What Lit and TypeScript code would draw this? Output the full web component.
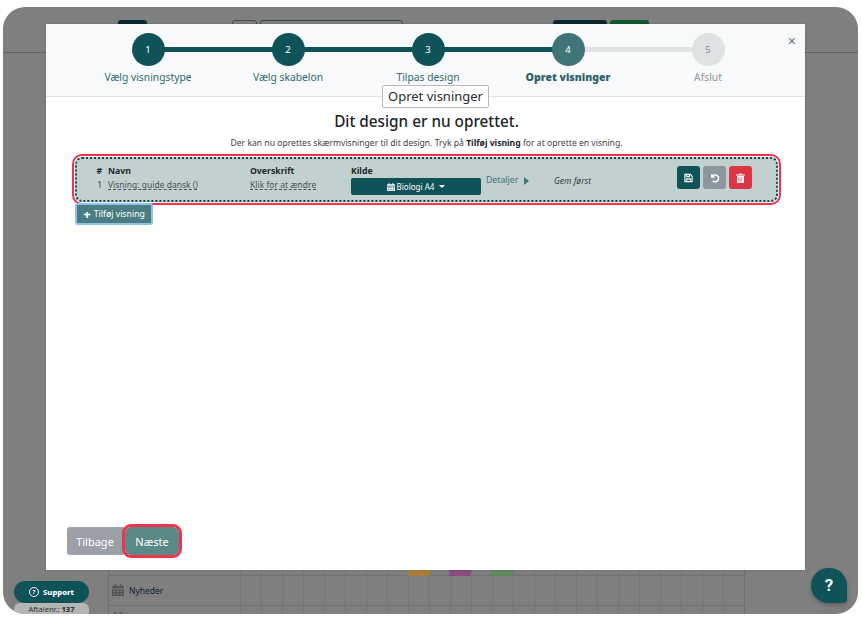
import { LitElement, html, css } from "lit";
import { customElement } from "lit/decorators.js";

const cal = (size: number) => html`<svg class="cal" width=${size} height=${size} viewBox="0 0 14 14"><path fill="currentColor" d="M3 0h1.6v2H9.4V0H11v2h2a1 1 0 0 1 1 1v2H0V3a1 1 0 0 1 1-1h2zM0 6h14v7a1 1 0 0 1-1 1H1a1 1 0 0 1-1-1zm2 1.5v1.6h2V7.500zm4 0v1.600h2V7.500zm4 0v1.600h2V7.500zM2 11v1.600h2V11zm4 0v1.600h2V11zm4 0v1.600h2V11z" fill-rule="evenodd"/></svg>`;

const steps = [
  { n: 1, label: "Vælg visningstype", state: "done" },
  { n: 2, label: "Vælg skabelon", state: "done" },
  { n: 3, label: "Tilpas design", state: "done" },
  { n: 4, label: "Opret visninger", state: "active" },
  { n: 5, label: "Afslut", state: "todo" },
];

@customElement("app-root")
export class AppRoot extends LitElement {
  static styles = css`
    :host { display: block; width: 862px; height: 618px; background: #fff; font-family: "Noto Sans", "Open Sans", sans-serif; overflow: hidden; }
    .frame { position: relative; margin: 7px 4px 4px 3px; height: 607px; border-radius: 22px; background: #7f7f7f; overflow: hidden; }
    .topline { position: absolute; left: 0; right: 0; top: 45px; height: 1px; background: #5f6364; }
    .ghost { position: absolute; top: 13px; height: 10px; border-radius: 3px 3px 0 0; }
    .g1 { left: 115px; width: 29px; background: #0b2a2d; }
    .g2 { left: 229px; width: 25px; border: 1px solid #3d4d4e; box-sizing: border-box; }
    .g3 { left: 257px; width: 143px; border: 1px solid #2d4a4c; box-sizing: border-box; }
    .g4 { left: 550px; width: 54px; background: #0b2a2d; }
    .g5 { left: 607px; width: 39px; background: #0f5a2c; }
    .grid { position: absolute; left: 105px; top: 563px; width: 635px; height: 44px; border-left: 1px solid #6f6f6f; border-right: 1px solid #6f6f6f;
      background-image: linear-gradient(180deg, transparent 5px, #707070 5px, #707070 6px, transparent 6px, transparent 35px, #707070 35px, #707070 36px, transparent 36px); }
    .cells { position: absolute; left: 131px; right: 0; top: 0; bottom: 0;
      background-image: linear-gradient(90deg, #747474 1px, transparent 1px); background-size: 21px 100%; }
    .chip { position: absolute; top: 0; width: 22px; height: 6px; border-radius: 0 0 2px 2px; }
    .c1 { left: 299px; background: #a67c3c; }
    .c2 { left: 340px; background: #8a4d7e; }
    .c3 { left: 382px; background: #5f8a5f; }
    .rowlabel { position: absolute; left: 3px; top: 14px; display: flex; align-items: center; gap: 5px; font-size: 8.500px; color: #101a3a; }
    .rowlabel .cal, .rowicon { color: #555; }
    .rowicon { position: absolute; left: 3px; top: 37px; }
    .support { position: absolute; left: 11px; top: 574px; width: 75px; height: 22px; border-radius: 11px; background: #0f5257; color: #fff; font-size: 7.700px; font-weight: 800; display: flex; align-items: center; justify-content: center; gap: 4px; }
    .qicon { width: 8px; height: 8px; border-radius: 50%; border: 1px solid #fff; font-size: 6px; line-height: 8px; text-align: center; font-weight: 700; }
    .deal { position: absolute; left: 11px; top: 596px; width: 75px; height: 11px; border-radius: 6px 6px 0 0; background: #b5b5b5; color: #333; font-size: 7.500px; line-height: 12px; text-align: center; }
    .deal b { font-weight: 800; }
    .help { position: absolute; left: 808px; top: 561px; width: 36px; height: 35px; border-radius: 18px 18px 4px 18px; background: #0f5257; color: #fff; font: 700 17px/35px Roboto, sans-serif; text-align: center; box-shadow: 0 2px 4px rgba(0,0,0,.25); }

    .modal { position: absolute; left: 43px; top: 17px; width: 759px; height: 546px; background: #fff; display: flex; flex-direction: column; box-shadow: 0 0 2px rgba(0,0,0,.2); }
    .head { height: 72px; background: #f8f9fa; border-bottom: 1px solid #dee2e6; box-sizing: content-box; display: flex; justify-content: flex-start; padding-left: 32px; position: relative; flex: none; }
    .step { width: 140px; flex: none; display: flex; flex-direction: column; align-items: center; position: relative; padding-top: 9px; }
    .circle { width: 33px; height: 33px; border-radius: 50%; background: #0f5257; color: #fff; font-size: 9.500px; display: flex; align-items: center; justify-content: center; position: relative; z-index: 1; }
    .step.active .circle { background: #407578; }
    .step.todo .circle { background: #dee2e3; color: #8a9094; }
    .step .bar { position: absolute; left: 70px; width: 140px; top: 23px; height: 5px; background: #0f5257; }
    .step.active .bar { background: #dfe3e4; }
    .lab { margin-top: 4px; font-size: 10.300px; line-height: 14px; color: #30696d; white-space: nowrap; }
    .step.active .lab { font-size: 10.500px; font-weight: 900; color: #2d6165; }
    .step.todo .lab { color: #8f9599; }
    .close { position: absolute; right: 9px; top: 9px; font-size: 14px; line-height: 16px; color: #6c7074; font-family: "Liberation Sans", sans-serif; }
    .tip { position: absolute; left: 336px; top: 61px; width: 107px; height: 23px; box-sizing: border-box; border: 1px solid #b9b9b9; border-radius: 2px; background: #fff; color: #2b2b2b; font-size: 13px; line-height: 21px; text-align: center; white-space: nowrap; z-index: 3; }

    .body { flex: 1; display: flex; flex-direction: column; align-items: stretch; padding: 0 24px 0 26px; min-height: 0; }
    h2 { margin: 13px 0 0; font-size: 15.300px; line-height: 22px; font-weight: 500; color: #212529; text-align: center; }
    .sub { margin: 4px 0 0; font-size: 8.600px; line-height: 14px; color: #3a3f44; text-align: center; }
    .sub b { font-weight: 700; color: #212529; }
    .hl { margin-top: 4px; height: 51px; box-sizing: border-box; border: 2.500px solid #f0324b; border-radius: 10px; padding: 1px; background: #fff; }
    .row { height: 100%; box-sizing: border-box; background: #c2d1d0; border: 2px dotted #0f4549; border-radius: 7px; display: grid; grid-template-columns: 31px 142px 101px 135px 68px 123px auto; align-items: start; font-size: 8.500px; color: #343a40; }
    .cell { padding-top: 6px; line-height: 13px; white-space: nowrap; }
    .num { text-align: right; padding-right: 6px; padding-left: 5px; }
    .cell b { display: block; font-weight: 700; color: #212529; font-size: 8.700px; }
    .ul { text-decoration: underline dashed; text-decoration-skip-ink: none; text-underline-offset: 1px; color: #4a5055; }
    .dd { width: 130px; height: 17px; background: #0f5257; color: #fff; border-radius: 2px; display: flex; align-items: center; justify-content: center; gap: 2px; font-size: 8px; }
    .caret { width: 0; height: 0; border: 3px solid transparent; border-top-color: #fff; border-bottom: 0; margin-left: 3px; }
    .det { padding-top: 15px; color: #3f7276; font-size: 8.700px; display: flex; align-items: center; gap: 6px; line-height: 13px; }
    .tri { width: 0; height: 0; border: 4px solid transparent; border-left: 5px solid #3f7276; border-right: 0; }
    .gem { padding-top: 15px; font-style: italic; font-size: 8.500px; line-height: 13px; color: #3a4045; }
    .acts { display: flex; gap: 3px; padding-top: 7px; }
    .act { width: 23px; height: 23px; border-radius: 3px; display: flex; align-items: center; justify-content: center; color: #fff; }
    .a1 { background: #0f5257; } .a2 { background: #8b979c; } .a3 { background: #dc3545; }
    .add { margin: -2px 0 0 3px; align-self: flex-start; height: 22px; width: 78px; box-sizing: border-box; border: 2px solid #8fc1ee; border-radius: 3px; background: #4a7c80; color: #fff; font-size: 8.700px; display: flex; align-items: center; justify-content: center; gap: 3px; position: relative; }
    .plus { font-size: 13px; font-weight: 800; line-height: 12px; }
    .foot { display: flex; align-items: center; margin: auto 0 15px -5px; }
    .btn { height: 28px; display: flex; align-items: center; justify-content: center; color: #fff; font-size: 11px; border-radius: 3px; }
    .back { width: 58px; background: #9ba0a7; padding-right: 2px; box-sizing: border-box; }
    .next { width: 54px; background: #5a8a88; outline: 3px solid #f0324b; border-radius: 6px; position: relative; }
  `;

  render() {
    return html`<div class="frame">
      <div class="topline"></div>
      <div class="ghost g1"></div><div class="ghost g2"></div><div class="ghost g3"></div><div class="ghost g4"></div><div class="ghost g5"></div>
      <div class="grid">
        <div class="cells"></div>
        <div class="chip c1"></div><div class="chip c2"></div><div class="chip c3"></div>
        <div class="rowlabel">${cal(12)}<span>Nyheder</span></div>
        <div class="rowicon">${cal(12)}</div>
      </div>
      <div class="support"><span class="qicon">?</span><span>Support</span></div>
      <div class="deal">Aftalenr.: <b>137</b></div>
      <div class="help">?</div>

      <div class="modal">
        <div class="head">
          ${steps.map((s, i) => html`<div class="step ${s.state}">
            ${i < 4 ? html`<div class="bar"></div>` : ""}
            <div class="circle">${s.n}</div>
            <div class="lab">${s.label}</div>
          </div>`)}
          <div class="close">×</div>
          <div class="tip">Opret visninger</div>
        </div>
        <div class="body">
          <h2>Dit design er nu oprettet.</h2>
          <p class="sub">Der kan nu oprettes skærmvisninger til dit design. Tryk på <b>Tilføj visning</b> for at oprette en visning.</p>
          <div class="hl"><div class="row">
            <div class="cell num"><b>#</b>1</div>
            <div class="cell"><b>Navn</b><span class="ul">Visning: guide dansk ()</span></div>
            <div class="cell"><b>Overskrift</b><span class="ul">Klik for at ændre</span></div>
            <div class="cell"><b>Kilde</b><div class="dd">${cal(8)}<span>Biologi A4</span><i class="caret"></i></div></div>
            <div class="det">Detaljer <i class="tri"></i></div>
            <div class="gem">Gem først</div>
            <div class="acts">
              <div class="act a1"><svg width="9" height="10" viewBox="0 0 10 10"><path fill="none" stroke="currentColor" stroke-width="1.200" d="M1 1h6l2 2v6H1zM3 1v2.500h3V1M3 9V6h4v3"/></svg></div>
              <div class="act a2"><svg width="11" height="11" viewBox="0 0 12 12"><path fill="none" stroke="currentColor" stroke-width="1.600" d="M3 2.500v3h3M3.200 5.300A3.800 3.800 0 1 1 4 9.700"/></svg></div>
              <div class="act a3"><svg width="9" height="10" viewBox="0 0 9 10"><path fill="currentColor" fill-rule="evenodd" d="M0 1.500h3L3.500.5h2l.5 1h3v1H0zM1 3h7v6a1 1 0 0 1-1 1H2a1 1 0 0 1-1-1zm1.500 1.200v4.600h.8V4.200zm2.200 0v4.600h.8V4.200z"/></svg></div>
            </div>
          </div></div>
          <div class="add"><span class="plus">+</span><span>Tilføj visning</span></div>
          <div class="foot">
            <div class="btn back">Tilbage</div>
            <div class="btn next">Næste</div>
          </div>
        </div>
      </div>
    </div>`;
  }
}
